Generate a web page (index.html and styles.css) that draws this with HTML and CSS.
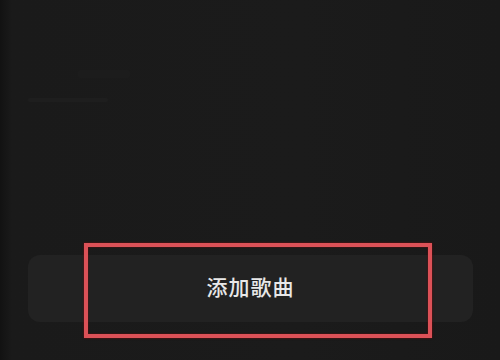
FILE: index.html
```html
<!DOCTYPE html>
<html lang="zh">
<head>
<meta charset="utf-8">
<link rel="stylesheet" href="styles.css">
</head>
<body>
<div class="screen">
  <div class="ghost ghost-short"></div>
  <div class="ghost ghost-long"></div>
  <div class="spacer"></div>
  <div class="footer">
    <button class="add-btn">添加歌曲</button>
    <div class="highlight"></div>
  </div>
</div>
</body>
</html>
```
FILE: styles.css
```css
html, body {
  margin: 0;
  padding: 0;
  background: #191919;
}
.screen {
  width: 500px;
  height: 360px;
  box-sizing: border-box;
  padding: 0 27px 0 28px;
  display: flex;
  flex-direction: column;
  background: linear-gradient(to right, #121212 0px, #1a1a1a 12px, #1b1b1b 60%, #191919 100%);
  font-family: "Noto Sans CJK SC", "Noto Sans", sans-serif;
}
.ghost {
  background: #1e1e1e;
  border-radius: 2px;
}
.ghost-short {
  margin-top: 70px;
  margin-left: 50px;
  width: 52px;
  height: 8px;
  background: #1c1c1c;
}
.ghost-long {
  margin-top: 20px;
  width: 80px;
  height: 4px;
}
.spacer {
  flex: 1;
}
.footer {
  position: relative;
  margin-bottom: 38px;
}
.add-btn {
  display: flex;
  align-items: center;
  justify-content: center;
  width: 100%;
  height: 67px;
  border: none;
  border-radius: 12px;
  background: #222222;
  color: #e8e8e8;
  font-family: "Noto Sans CJK SC", "Noto Sans", sans-serif;
  font-size: 21px;
  font-weight: 500;
  letter-spacing: 1px;
  padding: 0 0 5px 0;
}
.highlight {
  position: absolute;
  left: 56px;
  top: -12px;
  width: 348px;
  height: 95px;
  box-sizing: border-box;
  border: 4px solid #dc5157;
  box-shadow: 0 0 2px rgba(120, 10, 10, 0.9), inset 0 0 2px rgba(120, 10, 10, 0.9);
  pointer-events: none;
}
```
